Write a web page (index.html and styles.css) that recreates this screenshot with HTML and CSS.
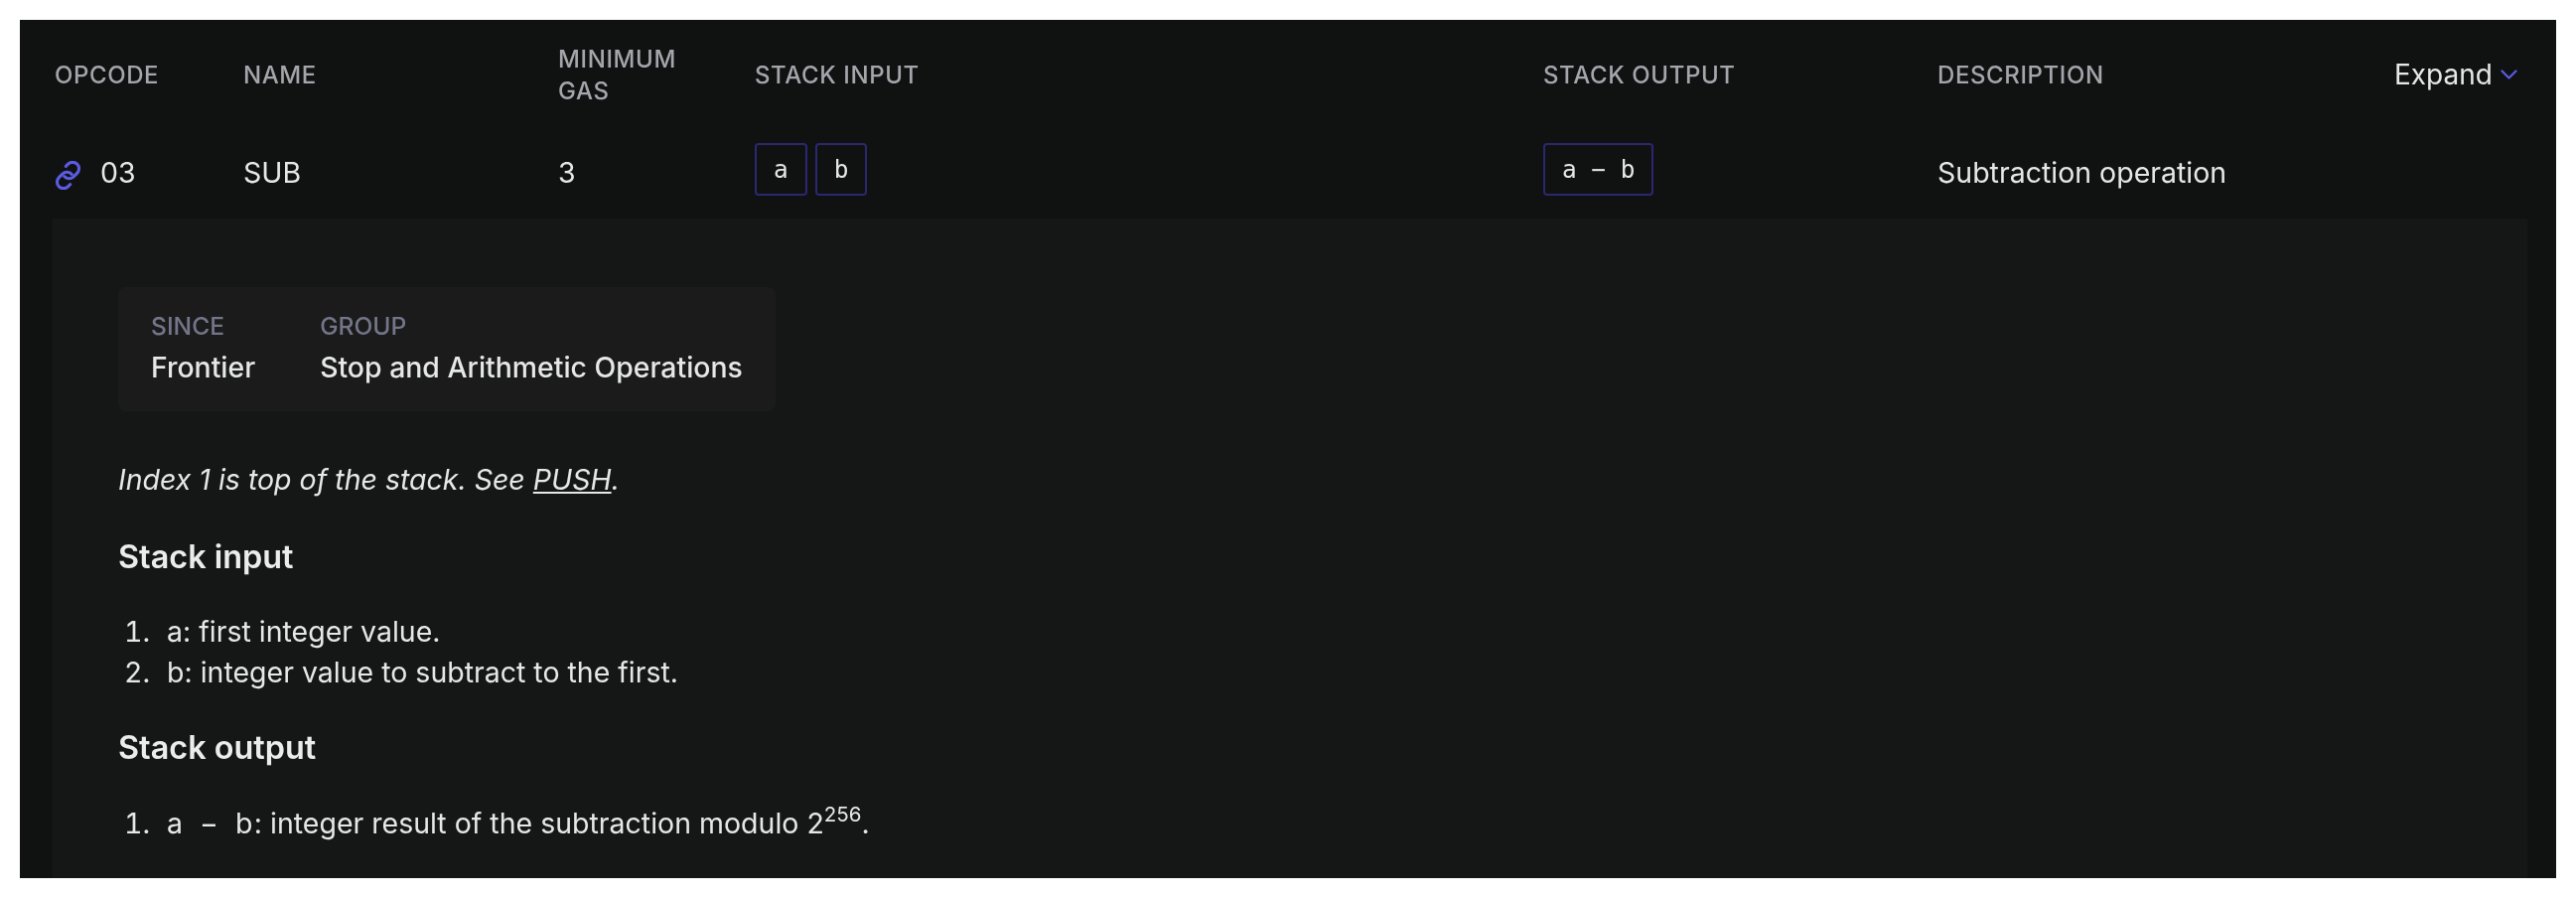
FILE: index.html
```html
<!DOCTYPE html>
<html>
<head>
  <title>Opcodes</title>
  <link rel="stylesheet" href="styles.css">
</head>

<body>
  <div class="opcode-box">
    <table class="opcode-table">
      <thead>
        <tr>
          <th class="col-opcode">Opcode</th>
          <th class="col-name">Name</th>
          <th class="col-gas">Minimum<br>Gas</th>
          <th class="col-input">Stack Input</th>
          <th class="col-output">Stack Output</th>
          <th class="col-desc">Description</th>
          <th class="col-expand">
            <span class="expand">Expand
              <svg class="chevron" viewBox="0 0 17 10" width="17" height="10" fill="none" stroke="#5b5ce2" stroke-width="2.2" stroke-linecap="round" stroke-linejoin="round"><path d="M1.5 1.5l7 7 7-7"/></svg>
            </span>
          </th>
        </tr>
      </thead>
      <tbody>
        <tr class="opcode-row">
          <td>
            <div class="opcode-cell">
              <svg class="link-icon" viewBox="0 0 27 27" width="29" height="29" fill="none" stroke="#5b5ce2" stroke-width="2.9" stroke-linecap="round" stroke-linejoin="round"><path d="M10 14.500a6 6 0 0 0 8.500.5l3.500-3.500a6 6 0 0 0-8.500-8.500l-2 2"/><path d="M17 12.500a6 6 0 0 0-8.500-.5l-3.500 3.500a6 6 0 0 0 8.500 8.500l2-2"/></svg>
              <span>03</span>
            </div>
          </td>
          <td>SUB</td>
          <td>3</td>
          <td class="stack-cell"><span class="stack-item">a</span><span class="stack-item">b</span></td>
          <td class="stack-cell"><span class="stack-item">a &minus; b</span></td>
          <td colspan="2">Subtraction operation</td>
        </tr>
        <tr>
          <td colspan="7" class="details">
            <div class="meta-card">
              <div>
                <div class="meta-label">Since</div>
                <div class="meta-value">Frontier</div>
              </div>
              <div>
                <div class="meta-label">Group</div>
                <div class="meta-value">Stop and Arithmetic Operations</div>
              </div>
            </div>
            <p class="note">Index 1 is top of the stack. See <a href="#">PUSH</a>.</p>
            <h2>Stack input</h2>
            <ol>
              <li>a: first integer value.</li>
              <li>b: integer value to subtract to the first.</li>
            </ol>
            <h2>Stack output</h2>
            <ol>
              <li><span class="formula">a&ensp;&minus;&ensp;b</span>: integer result of the subtraction modulo 2<sup>256</sup>.</li>
            </ol>
          </td>
        </tr>
      </tbody>
    </table>
  </div>
</body>
</html>
```

FILE: styles.css
```css
body {
  font-family: 'Inter', sans-serif;
  background-color: #fff;
  margin: 0;
  padding: 20px;
}

.opcode-box {
  width: 2554px;
  height: 864px;
  box-sizing: border-box;
  padding: 0 29px 0 33px;
  background-color: #101212;
  color: #e6e7e7;
  font-size: 28.5px;
  overflow: hidden;
  filter: blur(0.5px);
}

/* Table */
.opcode-table {
  width: 2492px;
  table-layout: fixed;
  border-collapse: collapse;
}

.opcode-table th {
  height: 112px;
  padding: 0 0 0 2px;
  box-sizing: border-box;
  text-align: left;
  font-size: 24px;
  line-height: 32px;
  font-weight: 500;
  letter-spacing: 0.6px;
  text-transform: uppercase;
  color: #a3a6ab;
}

.col-opcode { width: 190px; }
.col-name { width: 317px; }
.col-gas { width: 198px; }
.col-input { width: 794px; }
.col-output { width: 397px; }
.col-desc { width: 460px; }

.opcode-table th.col-expand {
  padding-right: 12px;
  text-align: right;
}

.expand {
  display: inline-flex;
  align-items: center;
  gap: 8px;
  font-size: 28px;
  font-weight: 400;
  letter-spacing: 0;
  text-transform: none;
  color: #e6e7e7;
}

.opcode-row td {
  height: 88px;
  padding: 0 0 6px 2px;
  box-sizing: border-box;
}

.opcode-cell {
  display: flex;
  align-items: center;
  gap: 18px;
}

.link-icon {
  margin: 3.5px 0 -3.5px -1px;
}

.opcode-row td.stack-cell {
  padding-bottom: 12px;
}

.stack-item {
  display: inline-block;
  box-sizing: border-box;
  height: 53px;
  padding: 0 17px;
  margin-right: 8px;
  border: 2px solid #2b2770;
  border-radius: 4px;
  font-family: 'DejaVu Sans Mono', monospace;
  font-size: 24.4px;
  line-height: 49px;
  text-align: center;
  white-space: pre;
}

/* Expanded panel */
.details {
  padding: 69px 66px 40px 66px;
  background-color: #151717;
}

.meta-card {
  display: flex;
  width: fit-content;
  gap: 65px;
  padding: 23px 33px 28px 33px;
  background-color: #1b1b1c;
  border-radius: 8px;
}

.meta-label {
  font-size: 24.6px;
  line-height: 32px;
  font-weight: 500;
  text-transform: uppercase;
  color: #737689;
}

.meta-value {
  margin-top: 10px;
  font-size: 28.4px;
  line-height: 32px;
  font-weight: 500;
}

.note {
  margin: 49px 0 0 0;
  line-height: 40px;
  font-style: italic;
}

.note a {
  color: inherit;
}

h2 {
  margin: 37.5px 0 0 0;
  font-size: 32.4px;
  line-height: 40px;
  font-weight: 600;
  color: #ececec;
}

ol + h2 {
  margin-top: 36.5px;
}

ol {
  margin: 34px 0 0 0;
  padding: 0 0 0 49px;
}

ol + h2 + ol {
  margin-top: 35px;
}

li {
  line-height: 41px;
}

li::marker {
  content: counter(list-item) ".\2002\200A";
}

.formula {
  letter-spacing: 1.4px;
}

sup {
  font-size: 20.5px;
  line-height: 0;
  vertical-align: 12px;
}
```
